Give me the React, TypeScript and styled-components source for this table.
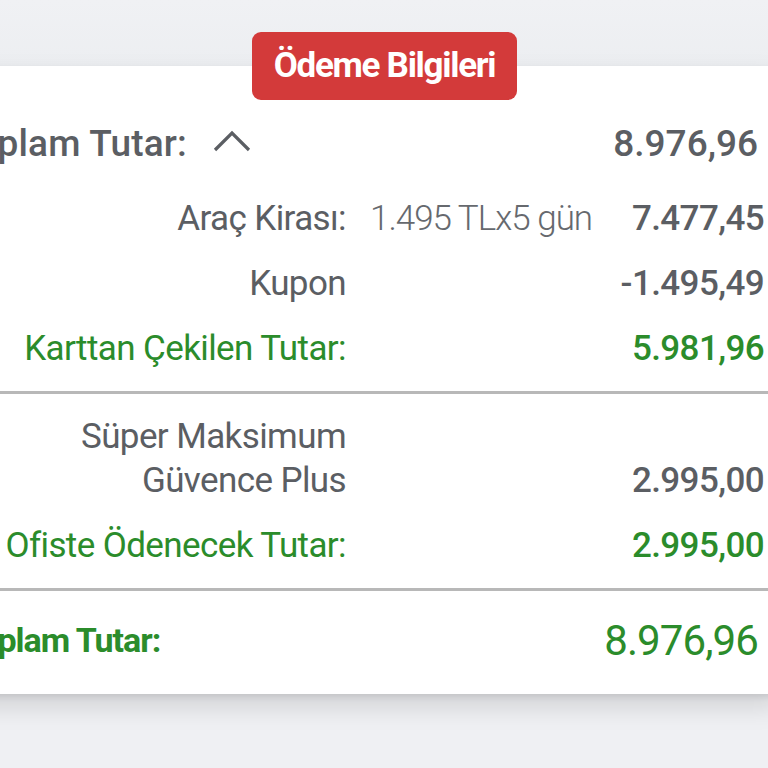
import React from "react";
import styled, { createGlobalStyle } from "styled-components";

const GlobalStyle = createGlobalStyle`
  html, body { margin: 0; padding: 0; background: #eff0f3; }
  body { font-family: Roboto, "Noto Sans", sans-serif; overflow: hidden; }
  * { box-sizing: border-box; }
`;

const GRAY = "#5b5e63";
const GREEN = "#2b8c2b";

const Page = styled.div`
  width: 768px;
  height: 768px;
  overflow: hidden;
  display: flex;
  flex-direction: column;
  padding-top: 32px;
  background: linear-gradient(#f0f1f4 0px, #eceef1 66px, #eff0f3 66px);
`;

const Badge = styled.div`
  position: relative;
  z-index: 2;
  align-self: center;
  width: 265px;
  height: 68px;
  margin-bottom: -34px;
  margin-left: 1px;
  border-radius: 9px;
  background: #d33a3a;
  color: #fff;
  display: flex;
  align-items: center;
  justify-content: center;
  font-family: Roboto, sans-serif;
  font-weight: 700;
  font-size: 35px;
  letter-spacing: -1.3px;
  padding-bottom: 2px;
`;

const Card = styled.div`
  margin: 0 -12px 0 -60px;
  background: #fff;
  padding-top: 42px;
  padding-bottom: 5px;
  box-shadow: 0 12px 24px rgba(0, 0, 0, 0.13), 0 3px 6px rgba(0, 0, 0, 0.08);
`;

const HeaderRow = styled.div`
  height: 70px;
  display: flex;
  align-items: center;
  padding: 0 22px 0 16px;
  color: ${GRAY};
`;

const HeaderLabel = styled.span`
  font-size: 37px;
  font-weight: 500;
  letter-spacing: 0.2px;
`;

const Chevron = styled.svg`
  margin-left: 26px;
  margin-top: -4px;
  flex: none;
`;

const HeaderValue = styled.span`
  margin-left: auto;
  font-size: 37px;
  font-weight: 500;
  letter-spacing: 0px;
`;

const Section = styled.div<{ $top?: number }>`
  padding: ${(p) => p.$top ?? 10}px 16px 10px 0;
`;

const ItemRow = styled.div<{ $green?: boolean }>`
  display: grid;
  grid-template-columns: 406px 1fr auto;
  column-gap: 24px;
  align-items: end;
  padding: 10.5px 0;
  line-height: 44px;
  color: ${(p) => (p.$green ? GREEN : GRAY)};
`;

const Label = styled.div`
  text-align: right;
  font-size: 35px;
  letter-spacing: -0.6px;
`;

const Detail = styled.div`
  font-size: 35px;
  font-weight: 300;
  letter-spacing: -1px;
  color: #66696e;
  white-space: nowrap;
`;

const Value = styled.div`
  text-align: right;
  font-size: 35px;
  font-weight: 500;
  letter-spacing: -0.6px;
  white-space: nowrap;
`;

const Divider = styled.div`
  height: 3px;
  background: #b8b8b8;
`;

const TotalRow = styled.div`
  height: 98px;
  display: flex;
  align-items: center;
  padding: 0 22px 0 22px;
  color: ${GREEN};
`;

const TotalLabel = styled.span`
  font-size: 34px;
  font-weight: 700;
  letter-spacing: -1px;
`;

const TotalValue = styled.span`
  margin-left: auto;
  font-size: 42px;
  font-weight: 400;
  letter-spacing: -0.9px;
`;

type Item = { label: React.ReactNode; detail?: string; value: string; green?: boolean };

const first: Item[] = [
  { label: "Araç Kirası:", detail: "1.495 TLx5 gün", value: "7.477,45" },
  { label: "Kupon", value: "-1.495,49" },
  { label: "Karttan Çekilen Tutar:", value: "5.981,96", green: true },
];

const second: Item[] = [
  {
    label: (
      <>
        Süper Maksimum
        <br />
        Güvence Plus
      </>
    ),
    value: "2.995,00",
  },
  { label: "Ofiste Ödenecek Tutar:", value: "2.995,00", green: true },
];

const Rows = ({ items }: { items: Item[] }) => (
  <>
    {items.map((it, i) => (
      <ItemRow key={i} $green={it.green}>
        <Label>{it.label}</Label>
        <Detail>{it.detail ?? ""}</Detail>
        <Value>{it.value}</Value>
      </ItemRow>
    ))}
  </>
);

export default function App() {
  return (
    <>
      <GlobalStyle />
      <Page>
        <Badge>Ödeme Bilgileri</Badge>
        <Card>
          <HeaderRow>
            <HeaderLabel>Toplam Tutar:</HeaderLabel>
            <Chevron width="38" height="22" viewBox="0 0 38 22">
              <polyline points="2,20 19,3 36,20" fill="none" stroke={GRAY} strokeWidth="3.2" />
            </Chevron>
            <HeaderValue>8.976,96</HeaderValue>
          </HeaderRow>
          <Section $top={8}>
            <Rows items={first} />
          </Section>
          <Divider />
          <Section>
            <Rows items={second} />
          </Section>
          <Divider />
          <TotalRow>
            <TotalLabel>Toplam Tutar:</TotalLabel>
            <TotalValue>8.976,96</TotalValue>
          </TotalRow>
        </Card>
      </Page>
    </>
  );
}
